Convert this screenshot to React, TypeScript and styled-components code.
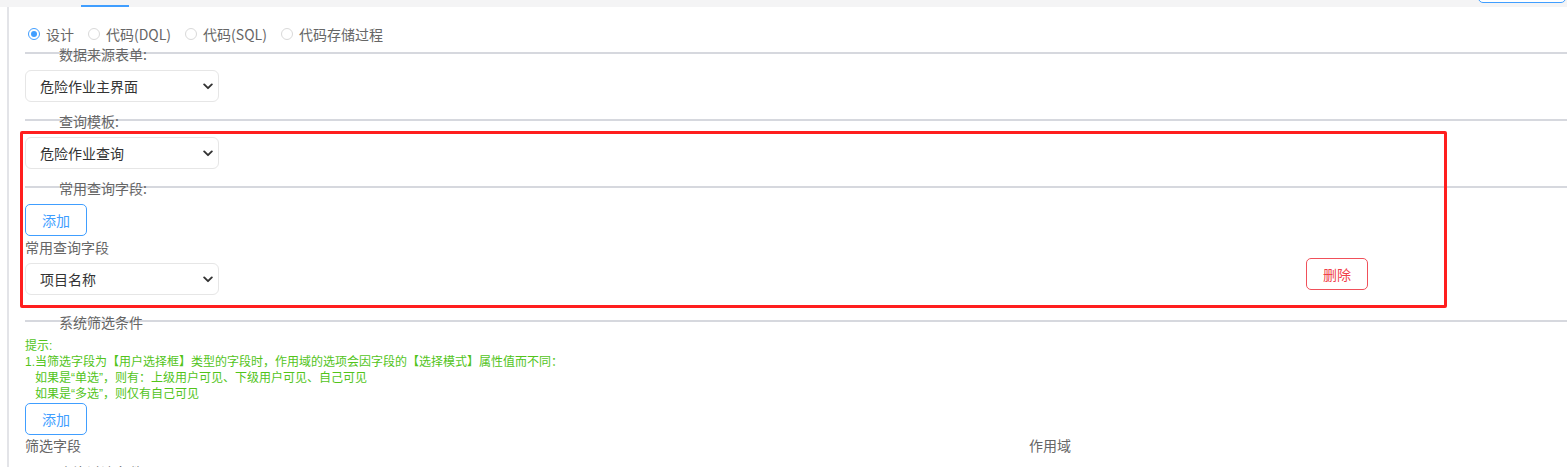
import React from "react"
import styled, { createGlobalStyle } from "styled-components"

const GlobalStyle = createGlobalStyle`
  html, body {
    margin: 0;
    padding: 0;
    background: #fff;
    overflow: hidden;
  }
  body {
    font-family: "Noto Sans CJK SC", "Liberation Sans", sans-serif;
    font-size: 14px;
    color: #333;
  }
`

const TopBar = styled.div`
  height: 7px;
  background: #f4f4f5;
  display: flex;
  align-items: flex-end;
  overflow: hidden;
`

const TabIndicator = styled.div`
  margin-left: 81px;
  width: 48px;
  height: 2px;
  background: #409eff;
`

const TopButton = styled.button`
  margin-left: auto;
  margin-right: 1px;
  margin-bottom: 4px;
  flex: 0 0 auto;
  width: 88px;
  height: 32px;
  border: 1px solid #409eff;
  border-radius: 5px;
  background: #fff;
`

const Panel = styled.div`
  margin-left: 7px;
  border-left: 2px solid #e3e4e8;
  padding-left: 16px;
  padding-top: 17px;
  min-height: 460px;
`

const RadioGroup = styled.div`
  display: flex;
  align-items: center;
  gap: 14px;
  height: 20px;
  padding-left: 3px;
`

const RadioItem = styled.label`
  display: inline-flex;
  align-items: center;
  gap: 6px;
  font-size: 14px;
  line-height: 20px;
  color: #666;
`

const RadioCircle = styled.span<{ $checked?: boolean }>`
  width: 12px;
  height: 12px;
  box-sizing: border-box;
  border-radius: 50%;
  border: 1px solid ${(p) => (p.$checked ? "#409eff" : "#d9d9d9")};
  display: inline-flex;
  align-items: center;
  justify-content: center;
  &::after {
    content: "";
    width: 6px;
    height: 6px;
    border-radius: 50%;
    background: ${(p) => (p.$checked ? "#409eff" : "transparent")};
  }
`

const Section = styled.div<{ $gap: number }>`
  margin-top: ${(p) => p.$gap}px;
  border-top: 2px solid #d6d8de;
`

const Legend = styled.div`
  margin-top: -10px;
  padding-left: 34px;
  line-height: 20px;
  font-size: 14px;
  color: #666;
`

const SelectWrap = styled.div`
  position: relative;
  width: 194px;
  margin-top: 6px;
`

const NativeSelect = styled.select`
  appearance: none;
  width: 100%;
  height: 32px;
  box-sizing: border-box;
  border: 1px solid #e6e6e6;
  border-radius: 6px;
  background: #fff;
  padding: 0 28px 0 14px;
  font-family: "Noto Sans CJK SC", "Liberation Sans", sans-serif;
  font-size: 14px;
  color: #333;
  outline: none;
`

const Chevron = styled.svg`
  position: absolute;
  right: 6px;
  top: 13px;
  width: 10px;
  height: 7px;
  pointer-events: none;
`

const Select = ({ value }: { value: string }) => (
  <SelectWrap>
    <NativeSelect defaultValue={value}>
      <option>{value}</option>
    </NativeSelect>
    <Chevron viewBox="0 0 10 7">
      <path d="M1.2 1.4 L5 5.2 L8.8 1.4" fill="none" stroke="#333" strokeWidth="1.9" strokeLinecap="round" strokeLinejoin="round" />
    </Chevron>
  </SelectWrap>
)

const Button = styled.button<{ $tone?: "primary" | "danger" }>`
  width: 62px;
  height: 32px;
  box-sizing: border-box;
  border-radius: 5px;
  background: #fff;
  font-family: "Noto Sans CJK SC", "Liberation Sans", sans-serif;
  font-size: 14px;
  padding: 0;
  cursor: pointer;
  border: 1px solid ${(p) => (p.$tone === "danger" ? "#f0505a" : "#409eff")};
  color: ${(p) => (p.$tone === "danger" ? "#f0404a" : "#409eff")};
`

const AddButton = styled(Button)<{ $top: number }>`
  display: block;
  margin-top: ${(p) => p.$top}px;
`

const FieldLabel = styled.div`
  font-size: 14px;
  line-height: 20px;
  color: #666;
  margin-top: 1px;
`

const Marked = styled.div`
  position: relative;
`

const Frame = styled.div`
  position: absolute;
  left: -5px;
  top: -6px;
  width: 1427px;
  height: 177px;
  box-sizing: border-box;
  border: 3px solid #ff1e1e;
  border-radius: 2px;
  pointer-events: none;
`

const FieldRow = styled.div`
  display: grid;
  grid-template-columns: 1281px auto;
  align-items: end;
`

const DeleteCell = styled.div`
  padding-bottom: 5px;
`

const Hint = styled.div`
  margin-top: 6px;
  font-family: "Liberation Sans", "Noto Sans CJK SC", sans-serif;
  font-size: 12px;
  line-height: 16px;
  color: #52c41a;
  white-space: pre;
`

const HeaderGrid = styled.div`
  display: grid;
  grid-template-columns: 1004px 1fr;
  font-size: 14px;
  line-height: 20px;
  color: #666;
`

const App: React.FC = () => (
  <>
    <GlobalStyle />
    <TopBar>
      <TabIndicator />
      <TopButton />
    </TopBar>
    <Panel>
      <RadioGroup>
        <RadioItem><RadioCircle $checked />设计</RadioItem>
        <RadioItem><RadioCircle />代码(DQL)</RadioItem>
        <RadioItem><RadioCircle />代码(SQL)</RadioItem>
        <RadioItem><RadioCircle />代码存储过程</RadioItem>
      </RadioGroup>

      <Section $gap={8}>
        <Legend>数据来源表单:</Legend>
        <Select value="危险作业主界面" />
      </Section>

      <Section $gap={17}>
        <Legend>查询模板:</Legend>
        <Marked>
          <Frame />
          <Select value="危险作业查询" />
          <Section $gap={17}>
            <Legend>常用查询字段:</Legend>
            <AddButton $top={6}>添加</AddButton>
            <FieldRow>
              <div>
                <FieldLabel>常用查询字段</FieldLabel>
                <Select value="项目名称" />
              </div>
              <DeleteCell>
                <Button $tone="danger">删除</Button>
              </DeleteCell>
            </FieldRow>
          </Section>
        </Marked>
      </Section>

      <Section $gap={25}>
        <Legend>系统筛选条件</Legend>
        <Hint>
          {"提示:\n1.当筛选字段为【用户选择框】类型的字段时，作用域的选项会因字段的【选择模式】属性值而不同：\n   如果是“单选”，则有：上级用户可见、下级用户可见、自己可见\n   如果是“多选”，则仅有自己可见"}
        </Hint>
        <AddButton $top={1}>添加</AddButton>
        <HeaderGrid>
          <span>筛选字段</span>
          <span>作用域</span>
        </HeaderGrid>
      </Section>

      <Section $gap={15}>
        <Legend>查询过滤条件</Legend>
      </Section>
    </Panel>
  </>
)

export default App
